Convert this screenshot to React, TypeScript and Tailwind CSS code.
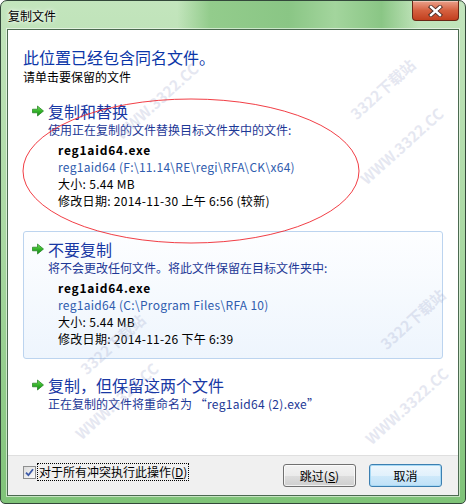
import React from "react";

const files = [
  {
    title: "复制和替换",
    desc: "使用正在复制的文件替换目标文件夹中的文件:",
    name: "reg1aid64.exe",
    path: "reg1aid64 (F:\\11.14\\RE\\regi\\RFA\\CK\\x64)",
    size: "大小: 5.44 MB",
    date: "修改日期: 2014-11-30 上午 6:56 (较新)",
    hover: false,
  },
  {
    title: "不要复制",
    desc: "将不会更改任何文件。将此文件保留在目标文件夹中:",
    name: "reg1aid64.exe",
    path: "reg1aid64 (C:\\Program Files\\RFA 10)",
    size: "大小: 5.44 MB",
    date: "修改日期: 2014-11-26 下午 6:39",
    hover: true,
  },
];

const marks = [
  { text: "WWW.3322.CC", left: 110, top: 95 },
  { text: "3322下载站", left: 345, top: 75 },
  { text: "WWW.3322.CC", left: 355, top: 140 },
  { text: "3322下载站", left: 375, top: 305 },
  { text: "WWW.3322.CC", left: 360, top: 400 },
  { text: "3322下载站", left: 75, top: 330 },
  { text: "WWW.3322.CC", left: 70, top: 395 },
];

function Arrow() {
  return (
    <svg width="14" height="12" viewBox="0 0 14 12" className="shrink-0">
      <defs>
        <linearGradient id="arr" x1="0" y1="0" x2="0" y2="1">
          <stop offset="0" stopColor="#7be05e" />
          <stop offset="0.5" stopColor="#35b52a" />
          <stop offset="1" stopColor="#148a14" />
        </linearGradient>
      </defs>
      <path d="M1.5 4.2 H6.5 V1 L12.5 6 L6.5 11 V7.8 H1.5 Z" fill="url(#arr)" stroke="#1c7d1c" strokeWidth="0.7" strokeLinejoin="round" />
    </svg>
  );
}

function Option({ f }: { f: (typeof files)[number] }) {
  return (
    <div
      className={`rounded-[3px] border pt-[7px] pb-[11px] pl-[7px] ${
        f.hover ? "border-[#bcd4ef] bg-gradient-to-b from-[#fdfeff] to-[#eef5fd]" : "border-transparent"
      }`}
    >
      <div className="flex items-center gap-[3px]">
        <Arrow />
        <span className="text-[16px] leading-[20px] text-[#1838a4]">{f.title}</span>
      </div>
      <div className="pl-[17px] text-[12px] leading-[17px] text-[#1d3896]">{f.desc}</div>
      <div className="mt-[3px] pl-[27px] text-[12px] leading-[17px] tracking-[0.3px]">
        <div className="font-bold text-black tracking-[0.8px]">{f.name}</div>
        <div className="text-[#2f5cae]">{f.path}</div>
        <div className="text-black">{f.size}</div>
        <div className="text-black">{f.date}</div>
      </div>
    </div>
  );
}

export default function App() {
  return (
    <div className="w-[466px] h-[504px] font-['Noto_Sans_CJK_SC',sans-serif] text-black">
      <div className="relative w-full h-full flex flex-col rounded-t-[7px] rounded-b-[5px] border border-[#33483a] bg-gradient-to-b from-[#c3e5bd] via-[#a8d8a1] to-[#7fc378] px-[6px] pb-[7px]">
        {/* title bar */}
        <div className="h-[28px] flex items-center bg-[linear-gradient(to_right,transparent_0%,transparent_38%,#93cc8c_45%,#8ac685_62%,#a3d59d_72%,#8ac685_82%,transparent_90%)] -mx-[6px] px-[7px]">
          <span className="text-[12px] pt-[1px] [text-shadow:0_0_6px_#ffffff,0_0_3px_#ffffff]">复制文件</span>
        </div>
        <div className="absolute top-0 right-[6px] w-[47px] h-[20px] rounded-b-[4px] border border-t-0 border-[#6a2716] bg-gradient-to-b from-[#e9a08a] via-[#d5603f] to-[#c23f1d] shadow-[inset_0_1px_0_rgba(255,255,255,0.4)] flex items-center justify-center">
          <svg width="15" height="12" viewBox="0 0 15 12">
            <path d="M3 2 L12 10 M12 2 L3 10" stroke="#4a2a22" strokeWidth="4.2" strokeLinecap="square" />
            <path d="M3 2 L12 10 M12 2 L3 10" stroke="#ffffff" strokeWidth="2.4" strokeLinecap="square" />
          </svg>
        </div>

        {/* client */}
        <div className="relative flex-1 flex flex-col border border-[#4b6a50] shadow-[0_0_0_1px_rgba(255,255,255,0.55)] overflow-hidden">
          <div className="flex-1 bg-white px-[15px] pt-[17px]">
            <div className="text-[16px] leading-[20px] text-[#0b36a8]">此位置已经包含同名文件。</div>
            <div className="mt-[2px] text-[12px] leading-[16px]">请单击要保留的文件</div>
            <div className="mt-[8px]">
              <Option f={files[0]} />
            </div>
            <div className="mt-[10px]">
              <Option f={files[1]} />
            </div>
            <div className="mt-[9px] pt-[7px] pl-[8px]">
              <div className="flex items-center gap-[3px]">
                <Arrow />
                <span className="text-[16px] leading-[20px] text-[#1838a4]">复制，但保留这两个文件</span>
              </div>
              <div className="pl-[17px] text-[12px] leading-[17px] text-[#1d3896]">
                正在复制的文件将重命名为 <span className="tracking-[0.3px]">“reg1aid64 (2).exe”</span>
              </div>
            </div>
          </div>

          {/* footer */}
          <div className="h-[40px] flex items-start justify-between border-t border-[#dfdfdf] bg-[#f0f0f0] pl-[15px] pr-[16px]">
            <div className="mt-[7px] flex items-center gap-[1px]">
              <div className="w-[13px] h-[13px] border border-[#8e8f8f] bg-gradient-to-br from-[#dcdcdc] to-[#fbfbfb] flex items-center justify-center">
                <svg width="9" height="9" viewBox="0 0 9 9">
                  <path d="M1 4.6 L3.4 7.2 L8 1.3" fill="none" stroke="#3d5aa8" strokeWidth="1.8" />
                </svg>
              </div>
              <span className="border border-dotted border-black px-[1px] text-[12px] leading-[16px]">
                对于所有冲突执行此操作(<span className="underline">D</span>)
              </span>
            </div>
            <div className="mt-[8px] flex gap-[13px]">
              <button className="w-[73px] h-[23px] rounded-[3px] border border-[#707070] bg-[linear-gradient(to_bottom,#f2f2f2_0%,#ebebeb_50%,#dddddd_51%,#cfcfcf_100%)] shadow-[inset_0_0_0_1px_rgba(255,255,255,0.7)] text-[12px] leading-[16px]">
                跳过(<span className="underline">S</span>)
              </button>
              <button className="w-[73px] h-[23px] rounded-[3px] border border-[#3c7fb1] bg-[linear-gradient(to_bottom,#eef7fd_0%,#e1f1fc_50%,#cfe9fa_51%,#bfe1f7_100%)] shadow-[inset_0_0_0_1px_#a7d9f5] text-[12px] leading-[16px]">
                取消
              </button>
            </div>
          </div>

          {/* watermark */}
          {marks.map((m, i) => (
            <span
              key={i}
              className="pointer-events-none absolute whitespace-nowrap text-[15px] font-bold text-[#9aa3c8] opacity-25 -rotate-[42deg] origin-left"
              style={{ left: m.left, top: m.top }}
            >
              {m.text}
            </span>
          ))}

          {/* red mark */}
          <svg className="pointer-events-none absolute left-0 top-0" width="452" height="300">
            <ellipse cx="183" cy="141" rx="168" ry="72" fill="none" stroke="#ee1c24" strokeWidth="1" opacity="0.85" />
          </svg>
        </div>
      </div>
    </div>
  );
}
